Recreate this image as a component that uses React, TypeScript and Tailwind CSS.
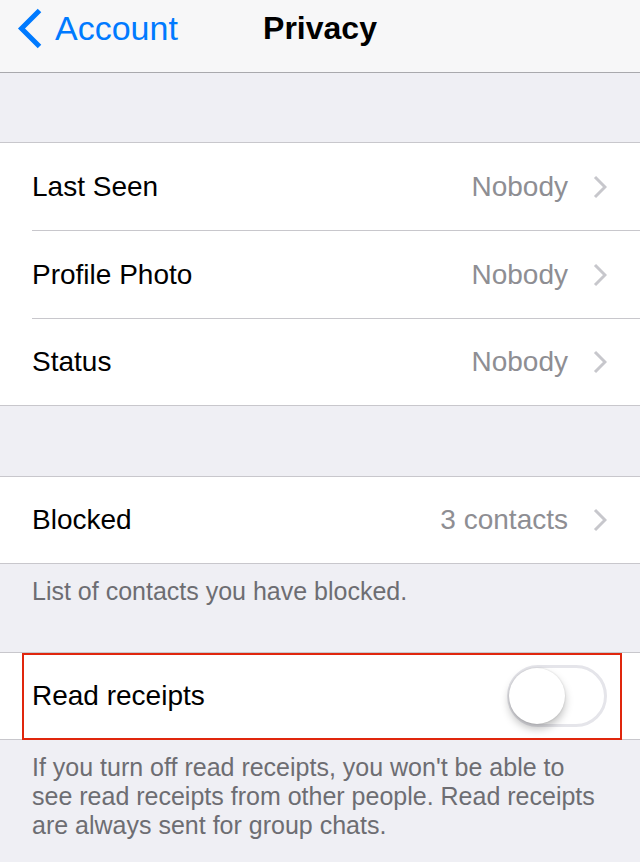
import React from 'react';

const font = { fontFamily: '"Liberation Sans", Arial, Helvetica, sans-serif' };

function Chevron() {
  return (
    <svg width="14" height="24" viewBox="0 0 14 24" fill="none" className="shrink-0">
      <path d="M2 2 L12 12 L2 22" stroke="#c7c7cc" strokeWidth="3" strokeLinejoin="miter" />
    </svg>
  );
}

function NavRow({ label, value, last }: { label: string; value: string; last?: boolean }) {
  return (
    <div className="bg-white pl-[32px]">
      <div
        className={`flex items-center pr-[33px] ${
          last ? 'h-[86px]' : 'h-[88px] border-b border-[#c8c7cc]'
        }`}
      >
        <span className="flex-1 text-[28px] text-black">{label}</span>
        <span className="mr-[25px] text-[28px] text-[#8e8e93]">{value}</span>
        <Chevron />
      </div>
    </div>
  );
}

function Toggle() {
  return (
    <div className="relative h-[62px] w-[100px] rounded-full border-[3px] border-[#e5e5ea] bg-white">
      <div className="absolute left-[-1px] top-[0px] h-[56px] w-[56px] rounded-full bg-white shadow-[0_5px_8px_rgba(0,0,0,0.25),0_0_2px_rgba(0,0,0,0.15)]" />
    </div>
  );
}

export default function App() {
  return (
    <div className="min-h-[862px] bg-[#efeff4]" style={font}>
      {/* Navigation bar */}
      <header className="relative h-[73px] border-b border-[#a9a9ad] bg-[#f7f7f8]">
        <div className="flex h-[56px] items-center pl-[17px]">
          <svg width="25" height="41" viewBox="0 0 25 41" fill="none">
            <path d="M22.5 2.5 L4.5 20.5 L22.5 38.5" stroke="#007aff" strokeWidth="5" />
          </svg>
          <span className="ml-[13px] text-[34px] leading-none text-[#007aff]">Account</span>
        </div>
        <div className="absolute inset-x-0 top-0 flex h-[56px] items-center justify-center">
          <span className="text-[32px] font-bold leading-none text-black">Privacy</span>
        </div>
      </header>

      <div className="h-[69px]" />

      <section className="border-y border-[#c8c7cc]">
        <NavRow label="Last Seen" value="Nobody" />
        <NavRow label="Profile Photo" value="Nobody" />
        <NavRow label="Status" value="Nobody" last />
      </section>

      <div className="h-[70px]" />

      <section className="border-y border-[#c8c7cc] bg-white pl-[32px]">
        <div className="flex h-[86px] items-center pr-[33px]">
          <span className="flex-1 text-[28px] text-black">Blocked</span>
          <span className="mr-[25px] text-[28px] text-[#8e8e93]">3 contacts</span>
          <Chevron />
        </div>
      </section>

      <div className="h-[88px] px-[32px] pt-[12px] text-[25px] leading-[30px] text-[#6d6d72]">
        List of contacts you have blocked.
      </div>

      <section className="relative border-y border-[#c8c7cc] bg-white pl-[32px]">
        <div className="flex h-[86px] items-center pr-[33px]">
          <span className="flex-1 text-[28px] text-black">Read receipts</span>
          <Toggle />
        </div>
        <div className="pointer-events-none absolute left-[22px] right-[18px] top-0 -bottom-px border-2 border-[#e0260d]" />
      </section>

      <div className="px-[32px] pt-[13px] text-[25px] leading-[29px] text-[#6d6d72]">
        <span className="block whitespace-nowrap">If you turn off read receipts, you won't be able to</span>
        <span className="block whitespace-nowrap">see read receipts from other people. Read receipts</span>
        <span className="block whitespace-nowrap">are always sent for group chats.</span>
      </div>
    </div>
  );
}
